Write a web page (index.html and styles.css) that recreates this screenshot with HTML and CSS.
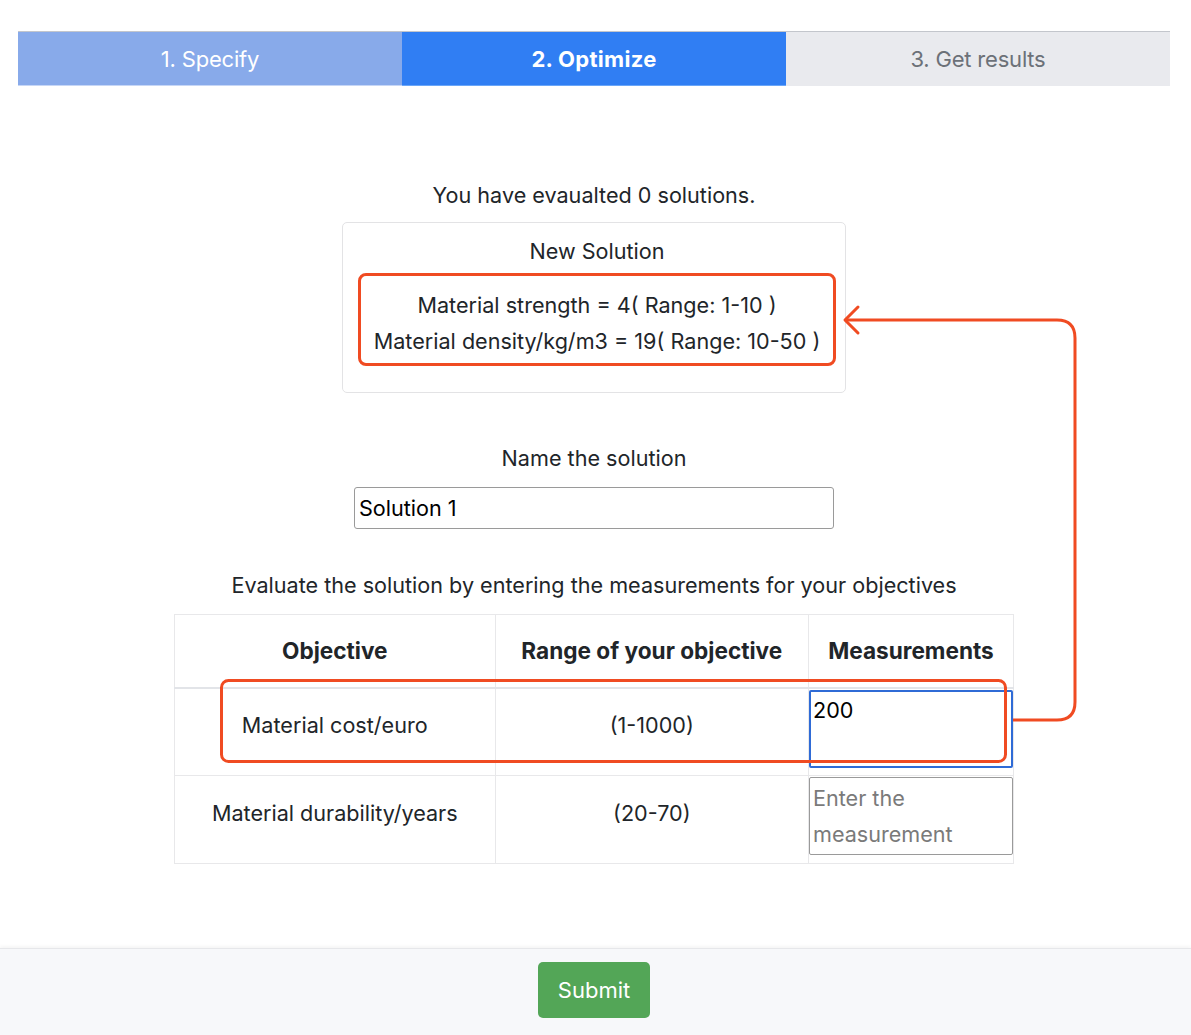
FILE: index.html
```html
<!DOCTYPE html>
<html lang="en">
<head>
<meta charset="utf-8">
<title>Optimize</title>
<link rel="stylesheet" href="styles.css">
</head>
<body>
<div class="page">
  <main class="content">
    <nav class="steps">
      <div class="step step-done">1. Specify</div>
      <div class="step step-active">2. Optimize</div>
      <div class="step step-todo">3. Get results</div>
    </nav>

    <section class="optimize">
      <p class="count">You have evaualted 0 solutions.</p>

      <div class="card">
        <div class="card-title">New Solution</div>
        <div class="mark-box">
          <div class="var-line">Material strength = 4( Range: 1-10 )</div>
          <div class="var-line">Material density/kg/m3 = 19( Range: 10-50 )</div>
        </div>
      </div>

      <label class="name-label" for="solname">Name the solution</label>
      <input id="solname" class="name-input" type="text" value="Solution 1">

      <p class="eval-text">Evaluate the solution by entering the measurements for your objectives</p>

      <table class="obj-table">
        <thead>
          <tr>
            <th class="col-obj">Objective</th>
            <th class="col-range">Range of your objective</th>
            <th class="col-meas">Measurements</th>
          </tr>
        </thead>
        <tbody>
          <tr>
            <td>Material cost/euro</td>
            <td>(1-1000)</td>
            <td class="meas-cell"><textarea class="meas-input meas-focus">200</textarea></td>
          </tr>
          <tr>
            <td>Material durability/years</td>
            <td>(20-70)</td>
            <td class="meas-cell"><textarea class="meas-input" placeholder="Enter the measurement"></textarea></td>
          </tr>
        </tbody>
      </table>
    </section>

    <svg class="annot" width="1191" height="948" viewBox="0 0 1191 948" aria-hidden="true">
      <rect x="221.5" y="680.5" width="784" height="81" rx="7" ry="7" fill="none" stroke="#f04b22" stroke-width="3"/>
      <path d="M1013 720 H1057 Q1075 720 1075 702 V338 Q1075 320 1057 320 H845" fill="none" stroke="#f04b22" stroke-width="3"/>
      <path d="M858 307 L845 320 L858 333" fill="none" stroke="#f04b22" stroke-width="3" stroke-linecap="round" stroke-linejoin="round"/>
    </svg>
  </main>

  <footer class="footer">
    <button class="submit" type="button">Submit</button>
  </footer>
</div>
</body>
</html>
```

FILE: styles.css
```css
* {
  box-sizing: border-box;
}

html, body {
  margin: 0;
  padding: 0;
}

body {
  font-family: Inter, "Liberation Sans", Arial, sans-serif;
  color: #212529;
  background: #ffffff;
  font-size: 21.6px;
}

.page {
  min-height: 1035px;
  display: flex;
  flex-direction: column;
}

.content {
  position: relative;
  flex: 1;
  padding: 31px 21px 0 18px;
}

.steps {
  display: grid;
  grid-template-columns: repeat(3, 1fr);
  height: 55px;
  border-top: 1px solid #c3c6cc;
}

.step {
  display: flex;
  align-items: center;
  justify-content: center;
  font-size: 22px;
  letter-spacing: -0.2px;
}

.step-done {
  background: #88aaea;
  color: #ffffff;
  border-bottom: 1px solid #c6d6f6;
}

.step-active {
  background: #307ef3;
  color: #ffffff;
  font-weight: 700;
  letter-spacing: 0.3px;
  border-bottom: 1px solid #6aa6f8;
}

.step-todo {
  background: #e9eaee;
  color: #6c7178;
}

.optimize {
  display: flex;
  flex-direction: column;
  align-items: center;
  padding-top: 94px;
}

.count {
  margin: 0;
  line-height: 30px;
}

.card {
  margin-top: 12px;
  width: 504px;
  border: 1px solid #e3e3e5;
  border-radius: 5px;
  padding: 13px 9px 26px 15px;
  text-align: center;
}

.card-title {
  line-height: 30px;
}

.mark-box {
  margin-top: 7px;
  border: 3px solid #f04b22;
  border-radius: 8px;
  padding: 11px 0 4px;
}

.var-line {
  line-height: 36px;
}

.name-label {
  margin-top: 50px;
  line-height: 30px;
}

.name-input {
  margin-top: 14px;
  width: 480px;
  height: 42px;
  border: 1px solid #9a9a9a;
  border-radius: 3px;
  padding: 0 4px;
  font-family: inherit;
  font-size: 21.6px;
  color: #000000;
  background: #ffffff;
}

.eval-text {
  margin: 41px 0 0;
  line-height: 30px;
}

.obj-table {
  margin-top: 14px;
  width: 840px;
  border-collapse: collapse;
  font-size: 21.6px;
}

.obj-table th,
.obj-table td {
  border: 1px solid #e8e8ea;
  text-align: center;
  vertical-align: middle;
}

.obj-table th {
  height: 73px;
  font-size: 22.6px;
  font-weight: 700;
  border-bottom: 2px solid #e2e4e8;
  padding: 0 6px;
}

.col-obj { width: 321px; }
.col-range { width: 314px; }
.col-meas { width: 205px; }

.obj-table td {
  height: 88px;
  padding: 0 0 13px;
}

.obj-table td.meas-cell {
  vertical-align: top;
  padding: 1px 0 0 0;
}

.meas-input {
  display: block;
  width: 204px;
  height: 78px;
  margin: 0;
  padding: 2px 3px;
  border: 1px solid #9a9a9a;
  border-radius: 2px;
  font-family: inherit;
  font-size: 21.6px;
  line-height: 36px;
  color: #000000;
  resize: none;
  overflow: hidden;
  background: #ffffff;
}

.meas-input.meas-focus {
  border: 2px solid #2f6bd6;
  padding: 0 2px;
}

.meas-input::placeholder {
  color: #7a7a7a;
}

.annot {
  position: absolute;
  left: 0;
  top: 0;
  pointer-events: none;
}

.footer {
  height: 87px;
  background: #f7f8fa;
  border-top: 1px solid #e6e7ea;
  box-shadow: 0 -2px 3px rgba(0, 0, 0, 0.04);
  display: flex;
  justify-content: center;
  padding: 13px 3px 0 0;
}

.submit {
  width: 112px;
  height: 56px;
  background: #53a657;
  color: #ffffff;
  border: 0;
  border-radius: 5px;
  font-family: inherit;
  font-size: 22px;
}
```
